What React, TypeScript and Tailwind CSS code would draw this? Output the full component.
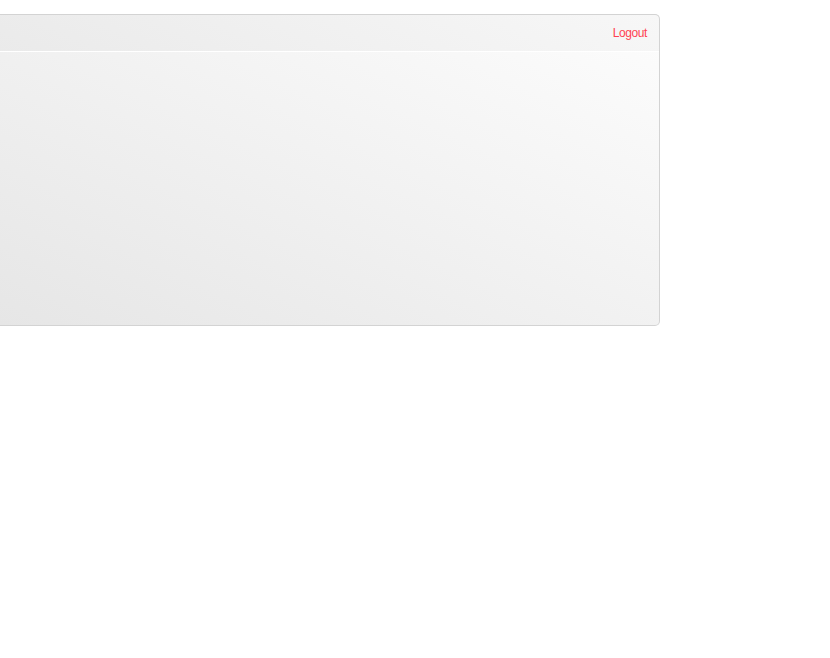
export default function App() {
  return (
    <div className="min-h-screen bg-white pt-[14px] font-['Liberation_Sans',Arial,sans-serif]">
      <section className="flex h-[312px] w-[660px] flex-col rounded-r-[5px] border-y border-r border-[#d3d3d3] bg-[linear-gradient(to_top_right,#e6e6e6,#fdfdfd)]">
        <header className="flex h-[37px] items-center justify-end border-b border-white bg-[rgba(0,0,0,0.025)] pr-[12px]">
          <a href="#" className="text-[12px] tracking-[-0.4px] text-[#ff3f52]">
            Logout
          </a>
        </header>
        <div className="flex-1" />
      </section>
    </div>
  );
}
